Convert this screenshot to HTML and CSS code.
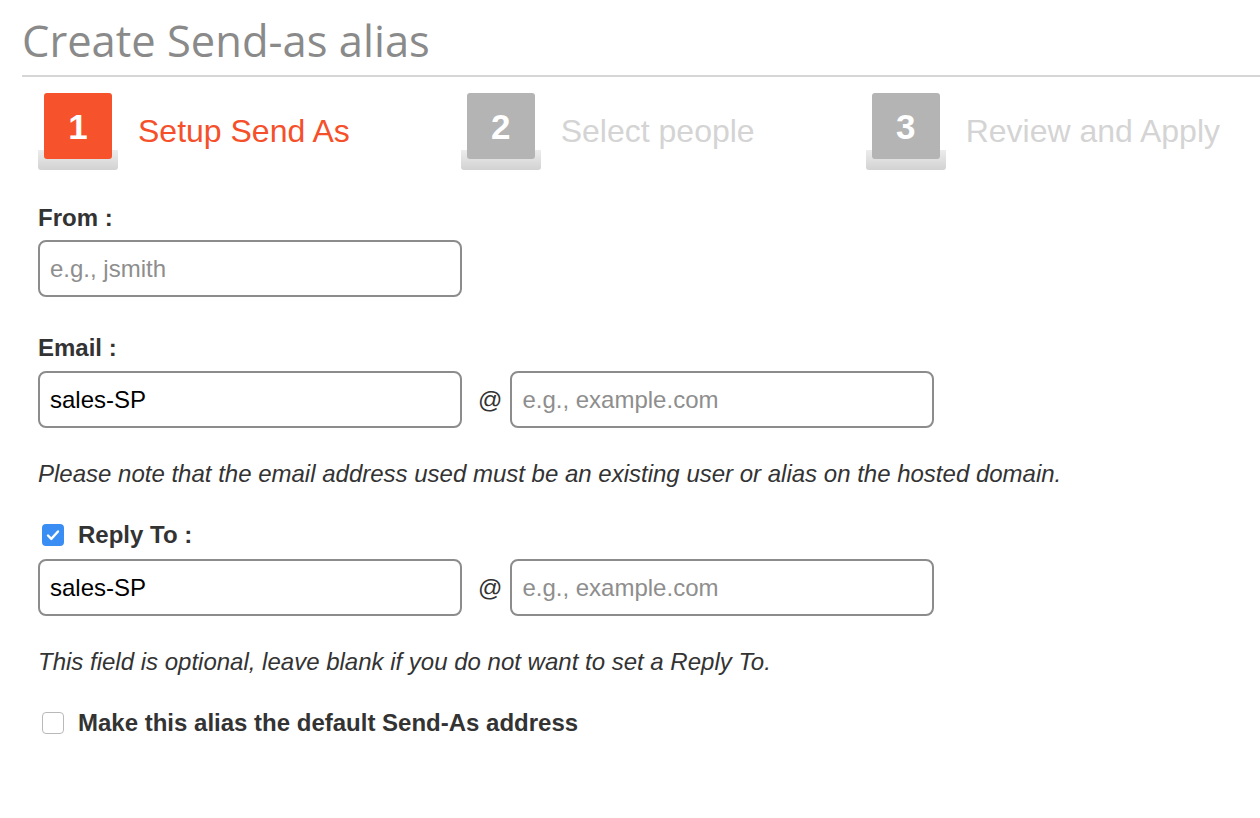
FILE: index.html
```html
<!DOCTYPE html>
<html lang="en">
<head>
<meta charset="utf-8">
<title>Create Send-as alias</title>
<link rel="stylesheet" href="styles.css">
</head>
<body>
<div class="page">
  <h1 class="title">Create Send-as alias</h1>

  <div class="steps">
    <div class="step active">
      <div class="step-icon"><div class="step-box">1</div></div>
      <div class="step-label">Setup Send As</div>
    </div>
    <div class="step">
      <div class="step-icon"><div class="step-box">2</div></div>
      <div class="step-label">Select people</div>
    </div>
    <div class="step">
      <div class="step-icon"><div class="step-box">3</div></div>
      <div class="step-label">Review and Apply</div>
    </div>
  </div>

  <form class="form">
    <label class="label" for="from">From :</label>
    <input class="field" id="from" type="text" placeholder="e.g., jsmith">

    <label class="label label-gap" for="email">Email :</label>
    <div class="row">
      <input class="field" id="email" type="text" value="sales-SP">
      <span class="at">@</span>
      <input class="field" type="text" placeholder="e.g., example.com">
    </div>

    <p class="note">Please note that the email address used must be an existing user or alias on the hosted domain.</p>

    <div class="check-row">
      <span class="checkbox checked">
        <svg viewBox="0 0 22 22" width="22" height="22"><path d="M6 11.5l3.3 3.4L16 7.5" fill="none" stroke="#fff" stroke-width="2.4" stroke-linecap="round" stroke-linejoin="round"/></svg>
      </span>
      <span class="check-label">Reply To :</span>
    </div>
    <div class="row">
      <input class="field" type="text" value="sales-SP">
      <span class="at">@</span>
      <input class="field" type="text" placeholder="e.g., example.com">
    </div>

    <p class="note">This field is optional, leave blank if you do not want to set a Reply To.</p>

    <div class="check-row">
      <span class="checkbox"></span>
      <span class="check-label">Make this alias the default Send-As address</span>
    </div>
  </form>
</div>
</body>
</html>
```

FILE: styles.css
```css
* { box-sizing: border-box; }

html, body {
  margin: 0;
  padding: 0;
  background: #fff;
}

body {
  font-family: "Liberation Sans", Arial, sans-serif;
  color: #333;
}

.page {
  width: 1260px;
}

.title {
  margin: 0 0 0 22px;
  padding: 17px 0 10px 0;
  font-family: "Open Sans", sans-serif;
  font-weight: 400;
  font-size: 43.5px;
  line-height: 48px;
  color: #8a8a8a;
  border-bottom: 2px solid #d6d6d6;
}

.steps {
  display: flex;
  align-items: center;
  gap: 111px;
  margin: 16px 0 0 38px;
}

.step {
  display: flex;
  align-items: center;
  gap: 20px;
}

.step-icon {
  width: 80px;
  height: 77px;
  padding: 0 6px 0 6px;
  border-radius: 0 0 3px 3px;
  background: linear-gradient(to bottom, transparent 0, transparent 57px, #ececec 57px, #d2d2d2 100%);
}

.step-box {
  width: 68px;
  height: 66px;
  padding-top: 2px;
  border-radius: 3px;
  background: #b4b4b4;
  color: #fff;
  font-weight: 700;
  font-size: 35px;
  display: flex;
  align-items: center;
  justify-content: center;
}

.step.active .step-box {
  background: #f6532d;
}

.step-label {
  font-size: 32px;
  color: #d4d4d4;
}

.step.active .step-label {
  color: #f5502a;
}

.form {
  padding: 35px 0 0 38px;
}

.label {
  display: block;
  font-weight: 700;
  font-size: 24px;
  line-height: 26px;
  margin-bottom: 9px;
  color: #333;
}

.label-gap {
  margin-top: 38px;
  margin-bottom: 10px;
}

.field {
  display: block;
  width: 424px;
  height: 57px;
  margin: 0;
  padding: 0 10px;
  border: 2px solid #8c8c8c;
  border-radius: 8px;
  font-family: "Liberation Sans", Arial, sans-serif;
  font-size: 24px;
  color: #000;
  background: #fff;
  outline: none;
}

.field::placeholder {
  color: #8e8e8e;
}

.row {
  display: flex;
  align-items: center;
}

.at {
  font-size: 24px;
  color: #333;
  margin: 0 8px 0 16px;
}

.note {
  margin: 33px 0 0 0;
  font-style: italic;
  font-size: 24px;
  line-height: 26px;
  color: #333;
}

.check-row {
  display: flex;
  align-items: center;
  margin-top: 35px;
  margin-bottom: 11px;
  height: 26px;
}

.checkbox {
  width: 22px;
  height: 22px;
  margin: 0 14px 0 4px;
  border-radius: 4px;
  border: 1px solid #b9b9b9;
  background: #fff;
  display: flex;
  align-items: center;
  justify-content: center;
}

.checkbox.checked {
  border: none;
  background: #3a8ef3;
}

.check-label {
  font-weight: 700;
  font-size: 24px;
  line-height: 26px;
  color: #333;
}
```
